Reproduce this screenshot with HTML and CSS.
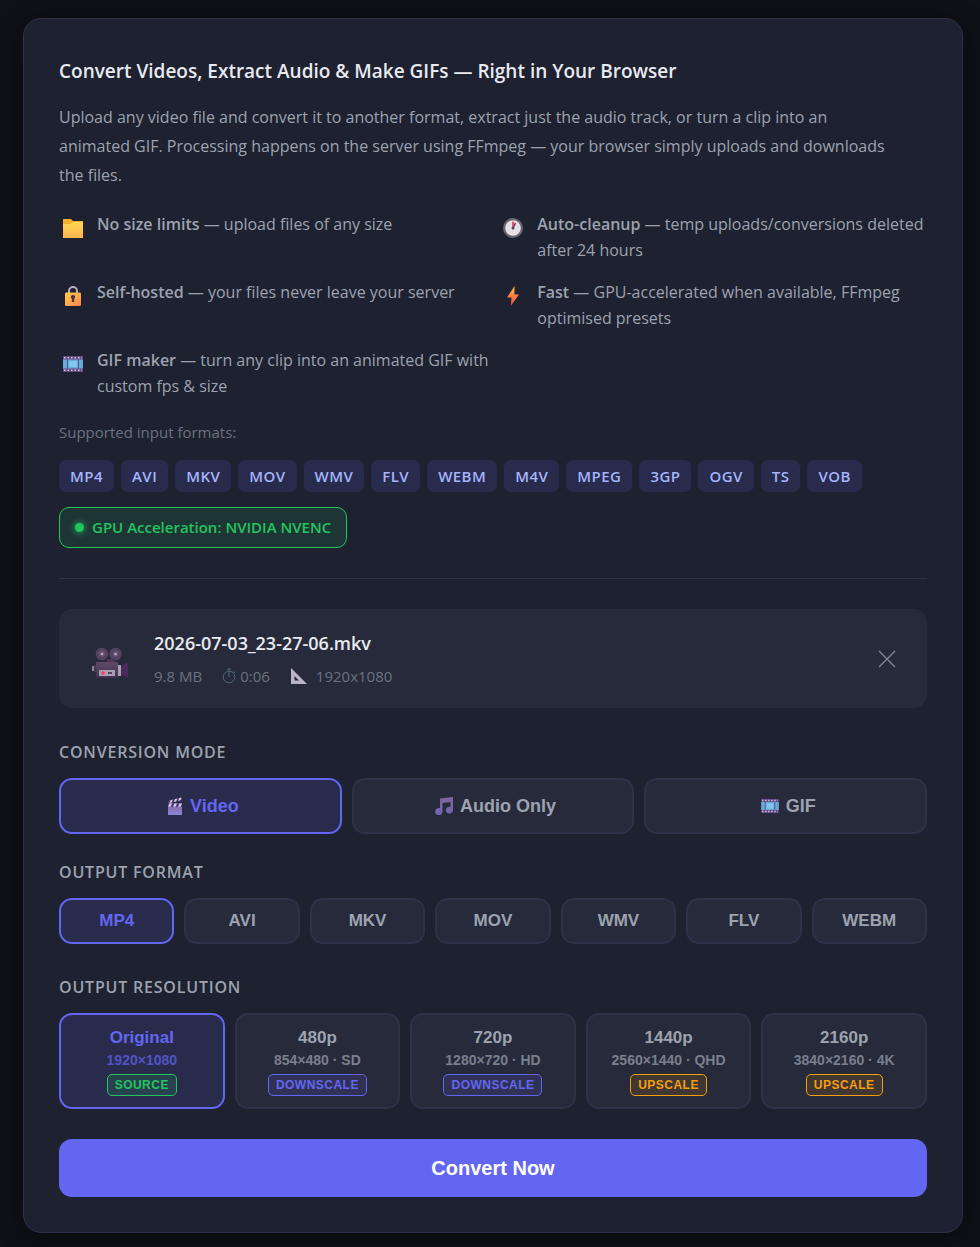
FILE: index.html
```html
<!DOCTYPE html>
<html lang="en">
<head>
    <meta charset="UTF-8">
    <meta name="viewport" content="width=device-width, initial-scale=1.0">
    <title>Video Converter</title>
    <link rel="stylesheet" href="styles.css">
</head>
<body>

    <!-- Shared icons -->
    <svg class="icon-defs" aria-hidden="true">
        <defs>
            <linearGradient id="gradFolder" x1="0" y1="0" x2="0" y2="1">
                <stop offset="0" stop-color="#ffd84f"/>
                <stop offset="1" stop-color="#ffb352"/>
            </linearGradient>
            <linearGradient id="gradLock" x1="0" y1="0" x2="1" y2="1">
                <stop offset="0" stop-color="#ffcf48"/>
                <stop offset="1" stop-color="#ff8552"/>
            </linearGradient>
            <linearGradient id="gradBolt" x1="0" y1="0" x2="0" y2="1">
                <stop offset="0" stop-color="#ffbe3c"/>
                <stop offset="1" stop-color="#f8434c"/>
            </linearGradient>
            <linearGradient id="gradClap" x1="0" y1="0" x2="0" y2="1">
                <stop offset="0" stop-color="#83649c"/>
                <stop offset="1" stop-color="#8b87d8"/>
            </linearGradient>
            <linearGradient id="gradCamera" x1="0" y1="0" x2="0" y2="1">
                <stop offset="0" stop-color="#604a68"/>
                <stop offset="1" stop-color="#433050"/>
            </linearGradient>
            <linearGradient id="gradNote" x1="0" y1="0" x2="0" y2="1">
                <stop offset="0" stop-color="#80659f"/>
                <stop offset="1" stop-color="#7067b2"/>
            </linearGradient>
        </defs>
        <symbol id="film" viewBox="0 0 20 16">
            <path fill="#624986" d="M0 0h20v16H0z"/>
            <path fill="#66acd8" d="M0 3.500h4v9H0zM5 3.500h10v9H5zM16 3.500h4v9h-4z"/>
            <path fill="#82c5ed" d="M6 5h8v6H6z"/>
            <path stroke="#d9cbe8" stroke-width="1.500" stroke-dasharray="1.500 2" d="M1 1.700h18M1 14.300h18"/>
        </symbol>
    </svg>

    <main class="card">
        <section class="intro">
            <h1 class="intro-title">Convert Videos, Extract Audio &amp; Make GIFs — Right in Your Browser</h1>
            <p class="intro-text">Upload any video file and convert it to another format, extract just the audio track, or turn a clip into an<br> animated GIF. Processing happens on the server using FFmpeg — your browser simply uploads and downloads<br> the files.</p>

            <ul class="features">
                <li class="feature">
                    <svg class="feature-icon" viewBox="0 0 20 20"><path fill="#f7ae2c" d="M0 1h8l2 2h10v6H0z"/><path fill="url(#gradFolder)" d="M0 6h7l3-2h10v16H0z"/></svg>
                    <div><strong>No size limits</strong> — upload files of any size</div>
                </li>
                <li class="feature">
                    <svg class="feature-icon" viewBox="0 0 20 20"><circle cx="10" cy="10" r="10" fill="#6d6670"/><circle cx="10" cy="10" r="7.800" fill="#e5dfe7"/><path stroke="#4a3a5c" stroke-width="1.500" d="M10 10l2.500-5"/><path stroke="#e83f5d" stroke-width="1.700" d="M10 3.500V10"/><circle cx="10" cy="10" r="1.500" fill="#58435e"/></svg>
                    <div><strong>Auto-cleanup</strong> — temp uploads/conversions deleted after 24 hours</div>
                </li>
                <li class="feature">
                    <svg class="feature-icon" viewBox="0 0 20 20"><path fill="none" stroke="#b9b0c0" stroke-width="2" d="M6 8V5a4 4 0 0 1 8 0v3"/><rect x="2" y="6.500" width="16" height="13.500" rx="1.200" fill="url(#gradLock)"/><path fill="#4b3445" d="M10 9a2 2 0 0 0-1.200 3.700V16h2.400v-3.300A2 2 0 0 0 10 9z"/></svg>
                    <div><strong>Self-hosted</strong> — your files never leave your server</div>
                </li>
                <li class="feature">
                    <svg class="feature-icon" viewBox="0 0 20 20"><path fill="url(#gradBolt)" d="M11.500 0L4 11.500h4.500L7.800 20 16 8.500h-4.500z"/></svg>
                    <div><strong>Fast</strong> — GPU-accelerated when available, FFmpeg optimised presets</div>
                </li>
                <li class="feature">
                    <svg class="feature-icon" viewBox="0 0 20 20"><use href="#film" y="2" width="20" height="16"/></svg>
                    <div><strong>GIF maker</strong> — turn any clip into an animated GIF with custom fps &amp; size</div>
                </li>
            </ul>

            <p class="formats-label">Supported input formats:</p>
            <div class="formats">
                <span class="format-tag">MP4</span>
                <span class="format-tag">AVI</span>
                <span class="format-tag">MKV</span>
                <span class="format-tag">MOV</span>
                <span class="format-tag">WMV</span>
                <span class="format-tag">FLV</span>
                <span class="format-tag">WEBM</span>
                <span class="format-tag">M4V</span>
                <span class="format-tag">MPEG</span>
                <span class="format-tag">3GP</span>
                <span class="format-tag">OGV</span>
                <span class="format-tag">TS</span>
                <span class="format-tag">VOB</span>
            </div>

            <div class="gpu-badge"><span class="gpu-dot"></span>GPU Acceleration: NVIDIA NVENC</div>
        </section>

        <!-- Selected file -->
        <section class="file-info">
            <svg class="file-icon" viewBox="0 0 36 32">
                <circle cx="10" cy="7" r="6.300" fill="#554260"/><circle cx="23.500" cy="7" r="6.300" fill="#554260"/>
                <circle cx="10" cy="7" r="3" fill="#68536f"/><circle cx="23.500" cy="7" r="3" fill="#68536f"/>
                <circle cx="10" cy="7" r="1.300" fill="#b8a9bd"/><circle cx="23.500" cy="7" r="1.300" fill="#b8a9bd"/>
                <path fill="#8d8297" d="M0 19h2v5H0z"/><path fill="#4a3655" d="M2 18h3v7H2zM15 12h8v4h-8z"/>
                <rect x="4" y="15" width="22" height="16" rx="1" fill="url(#gradCamera)"/>
                <path fill="#a99fb1" d="M26 18h3v11h-3zM7 23h16v6H7z"/>
                <path fill="#4a2860" d="M29 19l7-4v16l-7-4z"/>
                <circle cx="11" cy="26" r="1.800" fill="#f43b70"/><path fill="#554260" d="M16 25h4v2h-4z"/>
            </svg>
            <div class="file-details">
                <div class="file-name">2026-07-03_23-27-06.mkv</div>
                <div class="file-meta">
                    <span>9.8 MB</span>
                    <span class="meta-item">
                        <svg class="meta-timer" viewBox="0 0 14 16"><g fill="none" stroke="currentColor"><circle cx="7" cy="9" r="5.800"/><path d="M5 1h4M7 1v8M11.500 3.500l1.500 1.500"/></g></svg>
                        0:06
                    </span>
                    <span class="meta-item">
                        <svg class="meta-ruler" viewBox="0 0 16 16"><path fill="#bdb3c7" fill-rule="evenodd" d="M0 0l16 16H0zM3.500 8v4.500H8z"/></svg>
                        1920x1080
                    </span>
                </div>
            </div>
            <button type="button" class="file-remove" aria-label="Remove file">
                <svg viewBox="0 0 18 18"><path fill="none" stroke="currentColor" stroke-width="1.400" d="M1 1l16 16M17 1L1 17"/></svg>
            </button>
        </section>

        <section class="option-group">
            <h2 class="option-label">Conversion Mode</h2>
            <div class="option-row">
                <button type="button" class="option-btn mode-btn active">
                    <svg class="mode-icon" viewBox="0 0 16 18"><path fill="url(#gradClap)" d="M1 6h14v12H1z"/><path fill="#4c3968" d="M.5 4L14 .5l.8 2.800L1.300 6.500zM1 6.500h14v3.300H1z"/><path fill="#d8c9f4" d="M3.500 3.200l2.300-.6-1.200 3-2.300.6zM8 2l2.300-.6-1.200 3-2.300.6zM12.300 1L14 .5l.4 1.200-1 1.600-2.300.5zM2.500 6.500H5L3.500 9.800H1zM7.500 6.500H10L8.500 9.800H6zM12.500 6.500H15l-1.500 3.300H11z"/></svg>
                    Video
                </button>
                <button type="button" class="option-btn mode-btn">
                    <svg class="mode-icon note-icon" viewBox="0 0 18 18"><path fill="url(#gradNote)" d="M5 1.500L18 0v13a3.600 3.300 0 1 1-2.500-3V5L7.500 6v8.500A3.700 3.500 0 1 1 5 11.300z"/></svg>
                    Audio Only
                </button>
                <button type="button" class="option-btn mode-btn">
                    <svg class="mode-icon film-icon"><use href="#film"/></svg>
                    GIF
                </button>
            </div>
        </section>

        <section class="option-group">
            <h2 class="option-label">Output Format</h2>
            <div class="option-row">
                <button type="button" class="option-btn format-btn active">MP4</button>
                <button type="button" class="option-btn format-btn">AVI</button>
                <button type="button" class="option-btn format-btn">MKV</button>
                <button type="button" class="option-btn format-btn">MOV</button>
                <button type="button" class="option-btn format-btn">WMV</button>
                <button type="button" class="option-btn format-btn">FLV</button>
                <button type="button" class="option-btn format-btn">WEBM</button>
            </div>
        </section>

        <section class="option-group resolution-group">
            <h2 class="option-label">Output Resolution</h2>
            <div class="option-row">
                <button type="button" class="option-btn res-btn active">
                    <span class="res-name">Original</span>
                    <span class="res-size">1920×1080</span>
                    <span class="res-badge source">SOURCE</span>
                </button>
                <button type="button" class="option-btn res-btn">
                    <span class="res-name">480p</span>
                    <span class="res-size">854×480 · SD</span>
                    <span class="res-badge downscale">DOWNSCALE</span>
                </button>
                <button type="button" class="option-btn res-btn">
                    <span class="res-name">720p</span>
                    <span class="res-size">1280×720 · HD</span>
                    <span class="res-badge downscale">DOWNSCALE</span>
                </button>
                <button type="button" class="option-btn res-btn">
                    <span class="res-name">1440p</span>
                    <span class="res-size">2560×1440 · QHD</span>
                    <span class="res-badge upscale">UPSCALE</span>
                </button>
                <button type="button" class="option-btn res-btn">
                    <span class="res-name">2160p</span>
                    <span class="res-size">3840×2160 · 4K</span>
                    <span class="res-badge upscale">UPSCALE</span>
                </button>
            </div>
        </section>

        <button type="button" class="convert-btn">Convert Now</button>
    </main>

    <script>
// Mark the clicked option as active within its row
document.querySelectorAll('.option-row').forEach(row => {
    row.onclick = function(event) {
        const button = event.target.closest('.option-btn');
        if (!button) return;
        row.querySelector('.active').classList.remove('active');
        button.classList.add('active');
    };
});
    </script>
</body>
</html>
```
FILE: styles.css
```css
:root {
    --bg: #0f1117;
    --surface: #1e2130;
    --surface-2: #272a3a;
    --border: #2e3248;
    --primary: #6366f1;
    --text: #e8eaf0;
    --text-muted: #9ca3af;
    --text-dim: #6b7280;
    --success: #22c55e;
    --warning: #f59e0b;
}

* {
    box-sizing: border-box;
}

body {
    margin: 0;
    padding: 18px 17px 14px 23px;
    background: var(--bg);
    color: var(--text);
    font-family: "Segoe UI", "Open Sans", "Noto Sans", sans-serif;
}

h1, h2, p, ul {
    margin: 0;
    padding: 0;
}

.icon-defs {
    position: absolute;
    width: 0;
    height: 0;
}

.card {
    max-width: 940px;
    margin: 0 auto;
    padding: 35px;
    background: var(--surface);
    border: 1px solid var(--border);
    border-radius: 18px;
    box-shadow: 0 4px 24px rgba(0, 0, 0, 0.4);
}

/* Intro */
.intro {
    padding-bottom: 30px;
    border-bottom: 1px solid var(--border);
}

.intro-title {
    margin-bottom: 15px;
    font-size: 19px;
    font-weight: 600;
    line-height: 34px;
}

.intro-text {
    margin-bottom: 21px;
    color: var(--text-muted);
    font-size: 16px;
    line-height: 29px;
}

.features {
    display: grid;
    grid-template-columns: 1.02fr 1fr;
    gap: 16px 4px;
    margin-bottom: 21px;
    list-style: none;
}

.feature {
    display: flex;
    gap: 10px;
    color: var(--text-muted);
    font-size: 16px;
    line-height: 26px;
}

.feature strong {
    font-weight: 600;
}

.feature-icon {
    flex: none;
    width: 28px;
    height: 20px;
    margin-top: 7px;
}

.formats-label {
    margin-bottom: 16px;
    color: var(--text-dim);
    font-size: 15px;
    line-height: 24px;
}

.formats {
    display: flex;
    flex-wrap: wrap;
    gap: 7px;
    margin-bottom: 15px;
}

.format-tag {
    padding: 0 11px;
    border-radius: 7px;
    background: rgba(99, 102, 241, 0.15);
    color: #a5b4fc;
    font-size: 15px;
    font-weight: 600;
    line-height: 32px;
    letter-spacing: 0.03em;
}

.gpu-badge {
    display: inline-flex;
    align-items: center;
    gap: 8px;
    padding: 0 15px;
    border: 1px solid var(--success);
    border-radius: 10px;
    background: rgba(34, 197, 94, 0.12);
    color: var(--success);
    font-size: 15px;
    font-weight: 600;
    line-height: 39px;
}

.gpu-dot {
    width: 9px;
    height: 9px;
    border-radius: 50%;
    background: var(--success);
    box-shadow: 0 0 7px var(--success);
}

/* File */
.file-info {
    display: flex;
    align-items: center;
    gap: 26px;
    margin: 30px 0 32px;
    padding: 20px 31px 20px 33px;
    border-radius: 13px;
    background: var(--surface-2);
}

.file-icon {
    width: 36px;
    height: 32px;
    margin-top: 8px;
}

.file-details {
    flex: 1;
}

.file-name {
    margin-bottom: 6px;
    font-size: 18px;
    font-weight: 600;
    line-height: 29px;
}

.file-meta {
    display: flex;
    gap: 20px;
    color: var(--text-dim);
    font-size: 15px;
    line-height: 24px;
}

.meta-item {
    display: flex;
    align-items: center;
    gap: 4px;
}

.meta-timer {
    width: 14px;
    height: 16px;
    color: #50657a;
}

.meta-ruler {
    width: 18px;
    height: 16px;
    margin-right: 4px;
}

.file-remove {
    display: flex;
    padding: 0;
    border: none;
    background: none;
    color: #7d8794;
    cursor: pointer;
}

.file-remove svg {
    width: 18px;
    height: 18px;
}

/* Options */
.option-group {
    margin-bottom: 26px;
}

.option-group.resolution-group {
    margin-top: 31px;
    margin-bottom: 30px;
}

.option-label {
    margin-bottom: 14px;
    color: var(--text-muted);
    font-size: 16px;
    font-weight: 600;
    line-height: 24px;
    letter-spacing: 0.05em;
    text-transform: uppercase;
}

.option-row {
    display: flex;
    gap: 10px;
}

.option-btn {
    flex: 1 1 0;
    min-width: 0;
    padding: 0;
    border: 2px solid var(--border);
    border-radius: 13px;
    background: var(--surface-2);
    color: var(--text-muted);
    font-family: Arial, "Liberation Sans", sans-serif;
    font-weight: 600;
    cursor: pointer;
}

.option-btn.active {
    border-color: var(--primary);
    background: #292b4c;
    color: var(--primary);
}

.mode-btn {
    display: flex;
    align-items: center;
    justify-content: center;
    gap: 7px;
    padding-left: 5px;
    font-size: 18px;
    line-height: 52px;
}

.mode-icon {
    width: 16px;
    height: 18px;
}

.note-icon {
    width: 18px;
}

.film-icon {
    width: 18px;
    height: 14px;
}

.format-btn {
    font-size: 17px;
    line-height: 42px;
}

.res-btn {
    display: flex;
    flex-direction: column;
    align-items: center;
    padding: 12px 4px 11px;
}

.res-name {
    font-size: 17px;
    line-height: 22px;
}

.res-size {
    margin: 1px 0 4px;
    font-size: 14px;
    line-height: 20px;
    opacity: 0.7;
}

.res-badge {
    padding: 0 7px;
    border: 1px solid currentColor;
    border-radius: 5px;
    font-size: 12px;
    line-height: 20px;
    letter-spacing: 0.04em;
}

.res-badge.source {
    background: rgba(34, 197, 94, 0.15);
    color: var(--success);
}

.res-badge.downscale {
    background: rgba(99, 102, 241, 0.15);
    color: var(--primary);
}

.res-badge.upscale {
    background: rgba(245, 158, 11, 0.12);
    color: var(--warning);
}

.convert-btn {
    display: block;
    width: 100%;
    padding: 0;
    border: none;
    border-radius: 13px;
    background: var(--primary);
    color: #fff;
    font-family: Arial, "Liberation Sans", sans-serif;
    font-size: 20px;
    font-weight: 700;
    line-height: 58px;
    cursor: pointer;
}

.convert-btn:hover {
    background: #5558e6;
}
```
